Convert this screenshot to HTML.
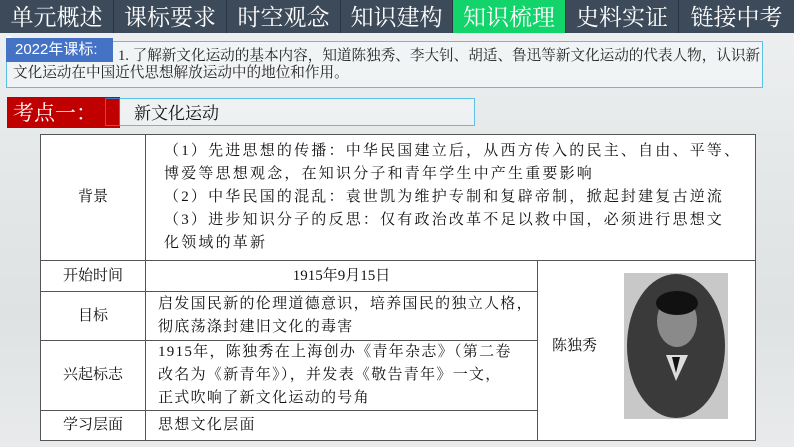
<!DOCTYPE html>
<html><head><meta charset="utf-8"><style>
*{margin:0;padding:0;box-sizing:border-box}
body{width:794px;height:447px;overflow:hidden;position:relative;font-family:"Liberation Serif","Noto Serif CJK SC",serif;background:linear-gradient(180deg,#eef0f1 0%,#e4e7e8 40%,#dfe2e3 70%,#e8eaeb 100%)}
.nav{position:absolute;top:0;left:0;width:794px;height:33px;background:#3d4a5a;display:flex}
.nav div{height:33px;color:#fff;font-size:23px;line-height:32px;text-align:center;border-right:1px solid #2a3440;font-family:"Noto Serif CJK SC",serif}
.nav .on{background:#13d46a}
.abs{position:absolute}
td{border:1px solid #555;font-size:15px;color:#111;padding:0;line-height:23px;vertical-align:middle;white-space:nowrap;overflow:hidden}
table{border-collapse:collapse;table-layout:fixed;background:#fff;position:absolute;left:40px;top:134px;width:715px;font-family:"Liberation Serif","Noto Serif CJK SC",serif}
.c{text-align:center}
.bg{padding-left:18px;letter-spacing:2.2px}
.m{padding-left:12px;letter-spacing:1.3px}
</style></head><body>
<div class="nav">
<div style="width:114px">单元概述</div><div style="width:113px">课标要求</div><div style="width:114px">时空观念</div><div style="width:112px">知识建构</div><div class="on" style="width:113px">知识梳理</div><div style="width:113px">史料实证</div><div style="width:115px;border:none">链接中考</div>
</div>
<div class="abs" style="left:6px;top:41px;width:757px;height:47px;border:1px solid #5bc0e6;background:rgba(245,248,250,.6)"></div>
<div class="abs" style="left:7px;top:36px;width:4px;height:14px;background:#fff"></div>
<div class="abs" style="left:6px;top:38px;width:107px;height:24px;background:#4472c4;color:#fff;font-family:'Liberation Sans','Noto Sans CJK SC',sans-serif;font-size:15px;line-height:24px;padding-left:9px">2022年课标:</div>
<div class="abs" style="left:118px;top:46px;font-size:14.6px;color:#222;white-space:nowrap;line-height:20px">1. 了解新文化运动的基本内容，知道陈独秀、李大钊、胡适、鲁迅等新文化运动的代表人物，认识新</div>
<div class="abs" style="left:13px;top:63px;font-size:14.6px;color:#222;white-space:nowrap;line-height:20px">文化运动在中国近代思想解放运动中的地位和作用。</div>
<div class="abs" style="left:105px;top:98px;width:370px;height:28px;border:1px solid #5bc0e6;background:rgba(245,248,250,.5)"></div>
<div class="abs" style="left:7px;top:97px;width:113px;height:31px;background:#c00000;color:#fff;font-size:21px;line-height:31px;padding-left:6px;font-family:'Noto Serif CJK SC',serif">考点一：</div>
<div class="abs" style="left:105px;top:98px;width:15px;height:28px;border:1px solid #4472c4"></div>
<div class="abs" style="left:134px;top:99px;font-size:17px;line-height:26px;color:#111;font-family:'Noto Serif CJK SC',serif">新文化运动</div>
<table>
<colgroup><col style="width:105px"><col style="width:392px"><col style="width:218px"></colgroup>
<tr style="height:126px"><td class="c">背景</td><td colspan="2" class="bg">（1）先进思想的传播：中华民国建立后，从西方传入的民主、自由、平等、<br>博爱等思想观念，在知识分子和青年学生中产生重要影响<br>（2）中华民国的混乱：袁世凯为维护专制和复辟帝制，掀起封建复古逆流<br>（3）进步知识分子的反思：仅有政治改革不足以救中国，必须进行思想文<br>化领域的革新</td></tr>
<tr style="height:31px"><td class="c">开始时间</td><td class="c">1915年9月15日</td><td rowspan="4" style="position:relative"><span style="position:absolute;left:14px;top:74px">陈独秀</span>
<svg style="position:absolute;left:86px;top:12px" width="104" height="146"><rect width="104" height="146" fill="#c8c8c8"/><ellipse cx="52" cy="73" rx="49" ry="72" fill="#3a3a3a"/><ellipse cx="53" cy="48" rx="20" ry="26" fill="#8a8a8a"/><ellipse cx="53" cy="30" rx="21" ry="12" fill="#111"/><path d="M42 82 L52 108 L64 82 Z" fill="#ddd"/><path d="M48 84 L52 100 L56 84Z" fill="#111"/></svg></td></tr>
<tr style="height:49px"><td class="c">目标</td><td class="m">启发国民新的伦理道德意识，培养国民的独立人格，<br>彻底荡涤封建旧文化的毒害</td></tr>
<tr style="height:68px"><td class="c">兴起标志</td><td class="m">1915年，陈独秀在上海创办《青年杂志》（第二卷<br>改名为《新青年》），并发表《敬告青年》一文，<br>正式吹响了新文化运动的号角</td></tr>
<tr style="height:30px"><td class="c">学习层面</td><td class="m">思想文化层面</td></tr>
</table>
</body></html>
